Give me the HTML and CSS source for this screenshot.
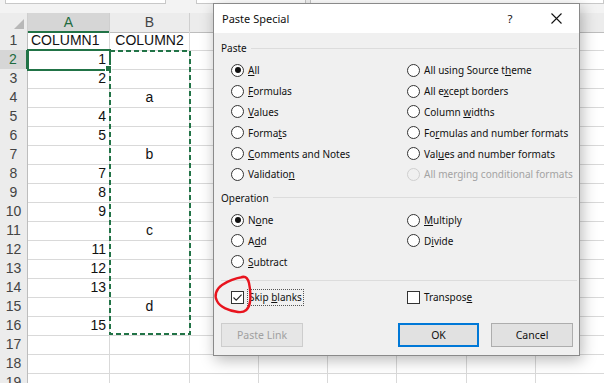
FILE: index.html
```html
<!DOCTYPE html>
<html>
<head>
<meta charset="utf-8">
<link rel="stylesheet" href="styles.css">
</head>
<body>
<div class="topbar">
  <div class="box box1"></div>
  <div class="box box2"></div>
  <div class="box box3"></div>
</div>
<div class="sheet">
  <div class="row hdr">
    <div class="corner"><i class="tri"></i></div>
    <div class="colh sel">A</div>
    <div class="colh">B</div>
    <div class="colh"></div><div class="colh"></div><div class="colh"></div><div class="colh"></div><div class="colh"></div><div class="colh"></div>
  </div>
  <div class="row"><div class="rh">1</div><div class="c">COLUMN1</div><div class="c ctr">COLUMN2</div><div class="c"></div><div class="c"></div><div class="c"></div><div class="c"></div><div class="c"></div><div class="c"></div></div>
  <div class="row"><div class="rh sel">2</div><div class="c num active">1</div><div class="c"></div><div class="c"></div><div class="c"></div><div class="c"></div><div class="c"></div><div class="c"></div><div class="c"></div></div>
  <div class="row"><div class="rh">3</div><div class="c num">2</div><div class="c"></div><div class="c"></div><div class="c"></div><div class="c"></div><div class="c"></div><div class="c"></div><div class="c"></div></div>
  <div class="row"><div class="rh">4</div><div class="c num"></div><div class="c ctr">a</div><div class="c"></div><div class="c"></div><div class="c"></div><div class="c"></div><div class="c"></div><div class="c"></div></div>
  <div class="row"><div class="rh">5</div><div class="c num">4</div><div class="c"></div><div class="c"></div><div class="c"></div><div class="c"></div><div class="c"></div><div class="c"></div><div class="c"></div></div>
  <div class="row"><div class="rh">6</div><div class="c num">5</div><div class="c"></div><div class="c"></div><div class="c"></div><div class="c"></div><div class="c"></div><div class="c"></div><div class="c"></div></div>
  <div class="row"><div class="rh">7</div><div class="c num"></div><div class="c ctr">b</div><div class="c"></div><div class="c"></div><div class="c"></div><div class="c"></div><div class="c"></div><div class="c"></div></div>
  <div class="row"><div class="rh">8</div><div class="c num">7</div><div class="c"></div><div class="c"></div><div class="c"></div><div class="c"></div><div class="c"></div><div class="c"></div><div class="c"></div></div>
  <div class="row"><div class="rh">9</div><div class="c num">8</div><div class="c"></div><div class="c"></div><div class="c"></div><div class="c"></div><div class="c"></div><div class="c"></div><div class="c"></div></div>
  <div class="row"><div class="rh">10</div><div class="c num">9</div><div class="c"></div><div class="c"></div><div class="c"></div><div class="c"></div><div class="c"></div><div class="c"></div><div class="c"></div></div>
  <div class="row"><div class="rh">11</div><div class="c num"></div><div class="c ctr">c</div><div class="c"></div><div class="c"></div><div class="c"></div><div class="c"></div><div class="c"></div><div class="c"></div></div>
  <div class="row"><div class="rh">12</div><div class="c num">11</div><div class="c"></div><div class="c"></div><div class="c"></div><div class="c"></div><div class="c"></div><div class="c"></div><div class="c"></div></div>
  <div class="row"><div class="rh">13</div><div class="c num">12</div><div class="c"></div><div class="c"></div><div class="c"></div><div class="c"></div><div class="c"></div><div class="c"></div><div class="c"></div></div>
  <div class="row"><div class="rh">14</div><div class="c num">13</div><div class="c"></div><div class="c"></div><div class="c"></div><div class="c"></div><div class="c"></div><div class="c"></div><div class="c"></div></div>
  <div class="row"><div class="rh">15</div><div class="c num"></div><div class="c ctr">d</div><div class="c"></div><div class="c"></div><div class="c"></div><div class="c"></div><div class="c"></div><div class="c"></div></div>
  <div class="row"><div class="rh">16</div><div class="c num">15</div><div class="c"></div><div class="c"></div><div class="c"></div><div class="c"></div><div class="c"></div><div class="c"></div><div class="c"></div></div>
  <div class="row"><div class="rh">17</div><div class="c"></div><div class="c"></div><div class="c"></div><div class="c"></div><div class="c"></div><div class="c"></div><div class="c"></div><div class="c"></div></div>
  <div class="row"><div class="rh">18</div><div class="c"></div><div class="c"></div><div class="c"></div><div class="c"></div><div class="c"></div><div class="c"></div><div class="c"></div><div class="c"></div></div>
  <div class="row"><div class="rh">19</div><div class="c"></div><div class="c"></div><div class="c"></div><div class="c"></div><div class="c"></div><div class="c"></div><div class="c"></div><div class="c"></div></div>
</div>

<div class="dialog">
  <div class="titlebar">
    <span class="title">Paste Special</span>
    <span class="help">?</span>
    <svg class="close" width="11" height="11" viewBox="0 0 11 11"><path d="M0.5 0.5 L10.5 10.5 M10.5 0.5 L0.5 10.5" stroke="#111" stroke-width="1.1" fill="none"/></svg>
  </div>
  <div class="dbody">
    <div class="legend"><span>Paste</span><i class="rule"></i></div>
    <div class="opts paste">
      <div class="opt"><span class="radio on"></span><span><u>A</u>ll</span></div>
      <div class="opt"><span class="radio"></span><span>All using Source t<u>h</u>eme</span></div>
      <div class="opt"><span class="radio"></span><span><u>F</u>ormulas</span></div>
      <div class="opt"><span class="radio"></span><span>All e<u>x</u>cept borders</span></div>
      <div class="opt"><span class="radio"></span><span><u>V</u>alues</span></div>
      <div class="opt"><span class="radio"></span><span>Column <u>w</u>idths</span></div>
      <div class="opt"><span class="radio"></span><span>Forma<u>t</u>s</span></div>
      <div class="opt"><span class="radio"></span><span>Fo<u>r</u>mulas and number formats</span></div>
      <div class="opt"><span class="radio"></span><span><u>C</u>omments and Notes</span></div>
      <div class="opt"><span class="radio"></span><span>Val<u>u</u>es and number formats</span></div>
      <div class="opt"><span class="radio"></span><span>Validatio<u>n</u></span></div>
      <div class="opt dis"><span class="radio"></span><span>All merging conditional formats</span></div>
    </div>
    <div class="legend op"><span>Operation</span><i class="rule"></i></div>
    <div class="opts operation">
      <div class="opt"><span class="radio on"></span><span>N<u>o</u>ne</span></div>
      <div class="opt"><span class="radio"></span><span><u>M</u>ultiply</span></div>
      <div class="opt"><span class="radio"></span><span>A<u>d</u>d</span></div>
      <div class="opt"><span class="radio"></span><span>D<u>i</u>vide</span></div>
      <div class="opt"><span class="radio"></span><span><u>S</u>ubtract</span></div>
    </div>
    <div class="sep"></div>
    <div class="opts checks">
      <div class="opt"><span class="check"><svg width="11" height="11" viewBox="0 0 11 11"><path d="M1.5 5.5 L4.2 8.2 L9.6 2.6" stroke="#222" stroke-width="1.1" fill="none"/></svg></span><span class="focus">Skip <u>b</u>lanks</span></div>
      <div class="opt"><span class="check"></span><span>Transpos<u>e</u></span></div>
    </div>
    <div class="buttons">
      <button class="btn dis">Paste Link</button>
      <span class="spacer"></span>
      <button class="btn ok">OK</button>
      <button class="btn">Cancel</button>
    </div>
  </div>
</div>

<svg class="annot" width="604" height="383" viewBox="0 0 604 383">
  <rect x="110" y="51" width="80" height="283" fill="none" stroke="#217346" stroke-width="2" stroke-dasharray="5 3"/>
  <path d="M243 277 C236 278 228 281 222 285 C216 289 214 296 217 301 C220 307 229 311 238 312 C245 313 249 309 250 302 C251 295 250 288 249 283 C248 279 246 276 242 277" fill="none" stroke="#e8141e" stroke-width="2.4" stroke-linecap="round"/>
</svg>
</body>
</html>
```
FILE: styles.css
```css
* { box-sizing: border-box; }
body {
  margin: 0;
  width: 604px;
  height: 383px;
  overflow: hidden;
  position: relative;
  background: #fff;
  font-family: "Liberation Sans", Arial, sans-serif;
}
.topbar {
  height: 13px;
  background: #f3f3f3;
  display: flex;
  align-items: flex-start;
}
.box {
  height: 4px;
  background: #fff;
  border: 1px solid #c8c8c8;
  border-top: 0;
}
.box1 { margin-left: 5px; width: 161px; }
.box2 { margin-left: 30px; width: 110px; }
.box3 { margin-left: 4px; flex: 1; }

.row {
  display: grid;
  grid-template-columns: 28px 82px 80px 69px 69px 69px 70px 69px 69px;
  height: 19px;
}
.row.hdr { height: 18px; }
.corner {
  background: #ececec;
  border-right: 1px solid #cfcfcf;
  border-bottom: 1px solid #bdbdbd;
  display: flex;
  align-items: flex-end;
  justify-content: flex-end;
  padding: 0 3px 3px 0;
}
.tri {
  width: 0;
  height: 0;
  border-left: 10px solid transparent;
  border-bottom: 10px solid #b8b8b8;
}
.colh {
  background: #ececec;
  border-right: 1px solid #cfcfcf;
  border-bottom: 1px solid #bdbdbd;
  text-align: center;
  font-size: 14px;
  line-height: 18px;
  color: #444;
}
.colh.sel {
  background: #d6d6d6;
  color: #1f6b40;
  border-bottom: 2px solid #217346;
}
.rh {
  background: #ececec;
  border-right: 1px solid #bdbdbd;
  border-bottom: 1px solid #d4d4d4;
  text-align: center;
  font-size: 14px;
  line-height: 19px;
  color: #444;
}
.rh.sel {
  background: #d6d6d6;
  color: #1f6b40;
  border-right: 2px solid #217346;
}
.c {
  border-right: 1px solid #d9d9d9;
  border-bottom: 1px solid #d9d9d9;
  font-size: 14px;
  line-height: 19px;
  padding: 0 3px;
  color: #111;
  white-space: nowrap;
  overflow: visible;
}
.num { text-align: right; }
.ctr { text-align: center; }
.c.active {
  position: relative;
  outline: 2px solid #217346;
  outline-offset: -1px;
}
.c.active::after {
  content: "";
  position: absolute;
  right: -3px;
  bottom: -3px;
  width: 5px;
  height: 5px;
  background: #217346;
  border: 1px solid #fff;
}

.dialog {
  position: absolute;
  left: 213px;
  top: 3px;
  width: 367px;
  background: #f0f0f0;
  border: 1px solid #8a8a8a;
  box-shadow: 2px 4px 14px rgba(0, 0, 0, 0.28);
  font-family: "Noto Sans", "Open Sans", sans-serif;
  font-size: 10px;
  color: #111;
}
.titlebar {
  height: 29px;
  background: #fff;
  display: flex;
  align-items: center;
  padding: 0 17px 0 8px;
}
.title { flex: 1; font-size: 11px; }
.help { width: 10px; text-align: center; font-size: 11.5px; margin-right: 36px; }
.close { display: block; }
.dbody {
  padding: 0 6px 8px 7px;
}
.legend {
  display: flex;
  align-items: center;
  height: 14px;
  margin-top: 8px;
  margin-right: -4px;
  gap: 4px;
}
.legend.op { margin-top: 6px; }
.rule {
  flex: 1;
  border-top: 1px solid #dcdcdc;
}
.opts {
  display: grid;
  grid-template-columns: 176px 1fr;
  padding-left: 10px;
}
.paste { margin-top: 5px; grid-auto-rows: 20.8px; }
.operation { margin-top: 5px; grid-auto-rows: 20.8px; }
.opt {
  display: flex;
  align-items: center;
  gap: 4px;
  white-space: nowrap;
}
.opt.dis { color: #a3a3a3; }
.radio {
  width: 13px;
  height: 13px;
  border: 1px solid #333;
  border-radius: 50%;
  background: #fff;
  display: flex;
  align-items: center;
  justify-content: center;
  flex: none;
}
.radio.on::after {
  content: "";
  width: 6px;
  height: 6px;
  border-radius: 50%;
  background: #111;
}
.opt.dis .radio { border-color: #cfcfcf; background: #f0f0f0; }
.sep {
  border-top: 1px solid #dcdcdc;
  margin-top: 8px;
  margin-right: -4px;
}
.checks { margin-top: 6px; grid-auto-rows: 20px; }
.check {
  width: 13px;
  height: 13px;
  border: 1px solid #333;
  background: #fff;
  display: flex;
  align-items: center;
  justify-content: center;
  flex: none;
}
.check svg { display: block; }
.focus {
  border: 1px dotted #555;
  padding: 0 1px;
  line-height: 15px;
  margin-left: -1px;
}
.buttons {
  display: flex;
  align-items: center;
  margin-top: 16px;
  gap: 12px;
}
.spacer { flex: 1; }
.btn {
  height: 24px;
  width: 82px;
  background: #e1e1e1;
  border: 1px solid #adadad;
  font-family: "Noto Sans", "Open Sans", sans-serif;
  font-size: 10.5px;
  color: #111;
  padding: 0;
}
.btn.ok { width: 81px; border: 2px solid #0078d7; }
.btn.dis { color: #a0a0a0; background: #e6e6e6; border-color: #cdcdcd; }
.annot {
  position: absolute;
  left: 0;
  top: 0;
  pointer-events: none;
}
```
